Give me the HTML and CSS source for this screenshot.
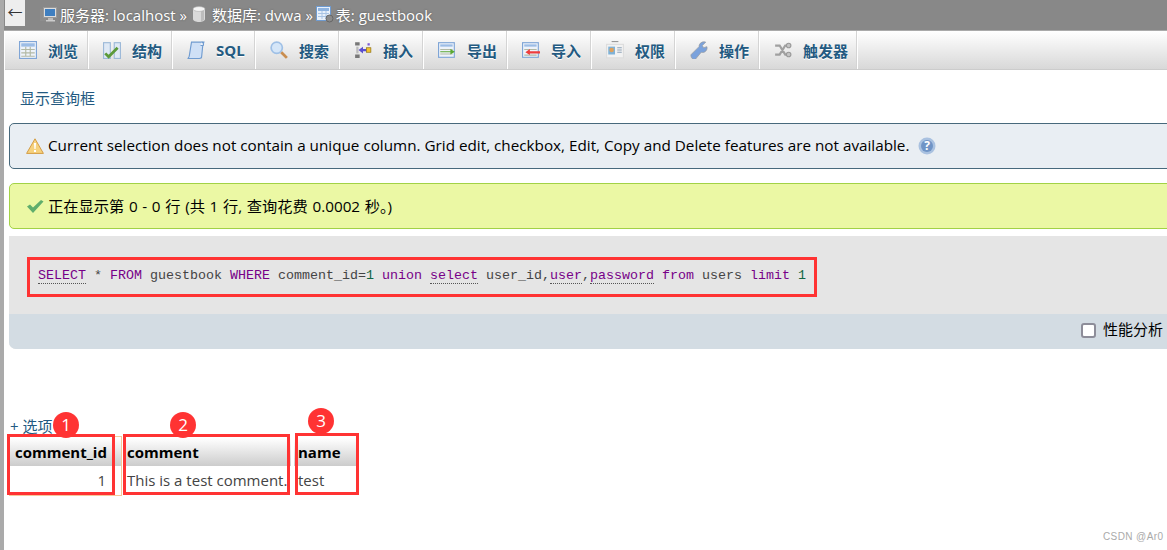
FILE: index.html
```html
<!DOCTYPE html>
<html lang="zh-CN">
<head>
    <meta charset="UTF-8">
    <meta name="viewport" content="width=device-width, initial-scale=1.0">
    <title>guestbook - phpMyAdmin</title>
    <link rel="stylesheet" href="styles.css">
</head>
<body>
    <div class="page">
        <div class="topbar">
            <a href="#" class="back">←</a>
            <div class="crumbs">
                <svg class="crumb-icon" viewBox="0 0 18 18"><rect x="0" y="4" width="6" height="12" fill="#8d8d8d"/><rect x="3.500" y="2.500" width="13" height="10" fill="#ddd" stroke="#999"/><rect x="5" y="4" width="10" height="7" fill="#3f7fc0"/><rect x="8" y="13" width="5" height="2" fill="#bbb"/><rect x="6" y="15" width="9" height="1.500" fill="#ccc"/></svg>
                <span>服务器: localhost »</span>
                <svg class="crumb-icon db-icon" viewBox="0 0 14 18"><path d="M1 4v10c0 4 12 4 12 0V4z" fill="#d9d9d9"/><path d="M9 5h3v10l-3 1.500z" fill="#bdbdbd"/><ellipse cx="7" cy="4" rx="6" ry="2.400" fill="#f4f4f4" stroke="#aaa" stroke-width=".6"/></svg>
                <span class="crumb-db">数据库: dvwa »</span>
                <svg class="crumb-icon" viewBox="0 0 18 18"><rect x=".5" y="1.500" width="14" height="14" fill="#e8f0fa" stroke="#6f9bd0"/><rect x="2" y="3" width="11" height="3" fill="#8fb4e0"/><path d="M2 8.500h11M2 11.500h11M6 6v8M10 6v8" stroke="#a9c4e4"/><circle cx="13.500" cy="13.500" r="3.500" fill="#8a8a8a" stroke="#666"/></svg>
                <span>表: guestbook</span>
            </div>
        </div>

        <ul class="tabs">
            <li class="tab">
                <svg class="tab-icon" viewBox="0 0 16 16"><rect x=".5" y=".5" width="15" height="15" fill="#eef3fa" stroke="#7fa5d6"/><rect x="2" y="2" width="12" height="3" fill="#9cbde6"/><path d="M2 7.500h12M2 10.500h12M2 13.500h12M6 5v9M10 5v9" stroke="#b2b9a5"/></svg>
                <span>浏览</span>
            </li>
            <li class="tab">
                <svg class="tab-icon" viewBox="0 0 16 16"><rect x=".5" y="1.500" width="6" height="14" fill="#dfe9f5" stroke="#9db9d8"/><rect x="10" y="1.500" width="5.500" height="14" fill="#dfe9f5" stroke="#9db9d8"/><path d="M2 11l3 3 8-8" fill="none" stroke="#5c9a3a" stroke-width="2.500"/></svg>
                <span>结构</span>
            </li>
            <li class="tab tab-sql">
                <svg class="tab-icon" viewBox="0 0 16 16"><path d="M4 1h11l-1 3-1 10c0 1-1 1.500-2 1.500H1l1-2z" fill="#cfe0f6" stroke="#6f9bd0"/><path d="M13 1c2 0 2 3 1 3h-2" fill="#eef3fa" stroke="#6f9bd0"/></svg>
                <span>SQL</span>
            </li>
            <li class="tab">
                <svg class="tab-icon" viewBox="0 0 16 16"><circle cx="6" cy="6" r="5" fill="#d5e6f8" stroke="#9fc0e6" stroke-width="1.500"/><path d="M10 10l5 5" stroke="#c98d4f" stroke-width="2.500"/></svg>
                <span>搜索</span>
            </li>
            <li class="tab">
                <svg class="tab-icon" viewBox="0 0 16 16"><path d="M1 1h4v3H1zM1 12h4v3H1z" fill="#777"/><path d="M2 5h2v6H2z" fill="#bbb"/><path d="M4 8l4-3v2h3v2H8v2z" fill="#5b4fd0"/><rect x="11" y="6" width="4" height="4" fill="#f2c230" stroke="#8a6d10" stroke-width=".6"/><path d="M12 2h2v2h-2z" fill="#7d5ad6"/></svg>
                <span>插入</span>
            </li>
            <li class="tab">
                <svg class="tab-icon" viewBox="0 0 16 16"><rect x=".5" y="1.500" width="14" height="13" fill="#eef3fa" stroke="#7fa5d6"/><rect x="2" y="3" width="11" height="2" fill="#9cbde6"/><path d="M2 7.500h11M2 11.500h11" stroke="#b2b9a5"/><path d="M2 9h9V7l4 2.500-4 2.500v-2H2z" fill="#5aa832"/></svg>
                <span>导出</span>
            </li>
            <li class="tab">
                <svg class="tab-icon" viewBox="0 0 16 16"><rect x=".5" y="1.500" width="14" height="13" fill="#eef3fa" stroke="#7fa5d6"/><rect x="2" y="3" width="11" height="2" fill="#9cbde6"/><path d="M2 7.500h11M2 12.500h11" stroke="#b2b9a5"/><path d="M16 9H7V7L3 10l4 2.500V11h9z" fill="#ee3d3d"/></svg>
                <span>导入</span>
            </li>
            <li class="tab">
                <svg class="tab-icon" viewBox="0 0 16 16"><rect x=".5" y="3" width="15" height="12" fill="#f2f2f2" stroke="#ddd"/><rect x="2" y="5" width="6" height="7" fill="#7fb2d8"/><circle cx="5" cy="8" r="2" fill="#e0a05a"/><path d="M10 6h4M10 8h4M10 10h4" stroke="#8fa3b8"/><path d="M5 .5h6" stroke="#999"/></svg>
                <span>权限</span>
            </li>
            <li class="tab">
                <svg class="tab-icon" viewBox="0 0 16 16"><path d="M1 12l7-7c0-3 3-5 6-4l-3 3 1 2 3-1c1 3-2 6-5 5l-5 6c-2 2-5-2-4-4z" fill="#7ba2dc" stroke="#9a9a9a" stroke-width=".6"/></svg>
                <span>操作</span>
            </li>
            <li class="tab">
                <svg class="tab-icon" viewBox="0 0 16 16"><path d="M1 4h4l5 8h3M1 12h4l5-8h3" fill="none" stroke="#a0a0a0" stroke-width="2"/><circle cx="13" cy="4" r="2" fill="#c4c4c4" stroke="#999"/><circle cx="13" cy="12" r="2" fill="#c4c4c4" stroke="#999"/></svg>
                <span>触发器</span>
            </li>
        </ul>

        <div class="content">
            <a href="#" class="query-link">显示查询框</a>

            <div class="notice">
                <svg class="msg-icon" viewBox="0 0 18 16"><path d="M9 .8L17.400 15.400H.6z" fill="#f6d27e" stroke="#d39c45" stroke-linejoin="round"/><path d="M8 5h2l-.4 6h-1.200zM8 12h2v2H8z" fill="#fff"/></svg>
                <span class="msg-text">Current selection does not contain a unique column. Grid edit, checkbox, Edit, Copy and Delete features are not available.</span>
                <svg class="help-icon" viewBox="0 0 18 18"><circle cx="9" cy="9" r="8.500" fill="#a9c1e0"/><circle cx="9" cy="9" r="6" fill="#6f94c6"/><text x="9" y="13" class="help-mark">?</text></svg>
            </div>

            <div class="success">
                <svg class="msg-icon" viewBox="0 0 18 16"><path d="M1 8.500l3-2 3 3L15 2l2.500 1.500L7 15z" fill="#5fae6c"/></svg>
                <span class="msg-text wide">正在显示第 0 - 0 行 (共 1 行, 查询花费 0.0002 秒。)</span>
            </div>

            <div class="sql-panel">
                <div class="sql-code">
                    <div class="sql-box"><a class="kw doc">SELECT</a> * <span class="kw">FROM</span> guestbook <span class="kw">WHERE</span> comment_id=<span class="num">1</span> <span class="kw">union</span> <a class="kw doc">select</a> user_id,<a class="kw doc">user</a>,<a class="kw doc">password</a> <span class="kw">from</span> users <span class="kw">limit</span> <span class="num">1</span></div>
                </div>
                <div class="sql-tools">
                    <label class="profiling"><input type="checkbox"><span>性能分析</span></label>
                </div>
            </div>

            <a href="#" class="options-link">+ 选项</a>

            <table class="results">
                <thead>
                    <tr>
                        <th class="col-id">comment_id</th>
                        <th class="col-comment">comment</th>
                        <th class="col-name">name</th>
                    </tr>
                </thead>
                <tbody>
                    <tr>
                        <td class="col-id num-cell">1</td>
                        <td class="col-comment">This is a test comment.</td>
                        <td class="col-name">test</td>
                    </tr>
                </tbody>
            </table>
        </div>

        <!-- 标注框 -->
        <div class="cell-outline"></div>
        <div class="mark mark-1"></div>
        <div class="mark mark-2"></div>
        <div class="mark mark-3"></div>
        <div class="badge badge-1">1</div>
        <div class="badge badge-2">2</div>
        <div class="badge badge-3">3</div>

        <div class="watermark">CSDN @Ar0</div>
    </div>
</body>
</html>
```

FILE: styles.css
```css
* {
    margin: 0;
    padding: 0;
    box-sizing: border-box;
}

html, body {
    height: 100%;
    overflow: hidden;
}

body {
    font-family: "Open Sans", "Noto Sans CJK SC", sans-serif;
    font-size: 15px;
    color: #000;
    background: #fff;
}

a {
    color: #235a81;
    text-decoration: none;
}

.page {
    position: relative;
    height: 550px;
    border-left: 4px solid #aaa;
    overflow: hidden;
}

.topbar {
    display: flex;
    height: 31px;
    background: #888;
    border-bottom: 1px solid #aaa;
}

.back {
    width: 20px;
    height: 26px;
    margin-left: 1px;
    background: #eee;
    color: #333;
    font-size: 15px;
    line-height: 24px;
    text-align: center;
}

.crumbs {
    display: flex;
    align-items: center;
    margin-left: 15px;
    height: 30px;
    padding-bottom: 2px;
    color: #fff;
    font-size: 15px;
    text-shadow: 0 0 2px #555;
}

.crumb-icon {
    width: 18px;
    height: 18px;
    margin-right: 2px;
}

.db-icon {
    width: 14px;
    margin-right: 6px;
}

.crumbs span {
    margin-right: 5px;
}

.crumbs .crumb-db {
    margin-right: 3px;
}

.tabs {
    display: flex;
    list-style: none;
    height: 39px;
    margin-left: 1px;
    background: linear-gradient(#fff, #d8d8d8);
    border-bottom: 1px solid #ccc;
}

.tab {
    display: flex;
    align-items: center;
    min-width: 84px;
    padding: 0 9px 0 14px;
    border-right: 1px solid #fff;
    box-shadow: inset -1px 0 0 #d4d4d4;
    color: #235a81;
    font-size: 15px;
    font-weight: bold;
    text-shadow: 0 1px 0 #fff;
}

.tab-sql {
    min-width: 83px;
}

.tab-icon {
    width: 18px;
    height: 18px;
    margin-right: 11px;
}

.content {
    padding: 0 0 0 5px;
}

.query-link {
    display: block;
    margin: 19px 0 0 11px;
    height: 22px;
    font-size: 15px;
    line-height: 18px;
}

.notice, .success {
    display: flex;
    align-items: center;
    height: 46px;
    margin-right: -20px;
    padding-left: 16px;
    border-radius: 5px;
    border: 1px solid;
}

.notice {
    margin-top: 12px;
    background: #e9eef3;
    border-color: #47697c;
}

.success {
    margin-top: 14px;
    background: #ebf8a4;
    border-color: #a2d246;
}

.msg-icon {
    width: 18px;
    height: 16px;
    margin-right: 4px;
}

.msg-text {
    margin-bottom: 3px;
    font-size: 15.260px;
}

.wide {
    word-spacing: .7px;
}

.help-icon {
    width: 18px;
    height: 18px;
    margin-left: 9px;
}

.help-mark {
    fill: #fff;
    font-size: 12px;
    font-weight: bold;
    text-anchor: middle;
}

.sql-panel {
    margin-top: 7px;
    margin-right: -20px;
    border-radius: 0 0 0 7px;
    overflow: hidden;
    background: #e5e5e5;
}

.sql-code {
    height: 78px;
    padding: 21px 0 0 18px;
}

.sql-box {
    display: inline-block;
    height: 40px;
    padding: 0 8px;
    border: 3px solid #f33;
    font-family: "Liberation Mono", monospace;
    font-size: 13.330px;
    line-height: 31px;
    color: #444;
}

.kw {
    color: #708;
}

.doc {
    border-bottom: 1px dotted #555;
}

.num {
    color: #164;
}

.sql-tools {
    display: flex;
    justify-content: flex-end;
    align-items: center;
    height: 35px;
    padding: 0 24px 6px 0;
    background: #d3dce3;
}

.profiling {
    display: flex;
    align-items: center;
    font-size: 15px;
}

.profiling input {
    appearance: none;
    width: 15px;
    height: 15px;
    margin: 4px 7px 0 0;
    background: #fff;
    border: 2px solid #8d8d99;
    border-radius: 3px;
}

.options-link {
    display: block;
    margin: 66px 0 0 1px;
    height: 22px;
    font-size: 15px;
    line-height: 22px;
}

.results {
    border-collapse: separate;
    border-spacing: 0;
    margin: 1px 0 0 1px;
}

.results th, .results td {
    background-clip: padding-box;
    border-right: solid #fff;
    white-space: nowrap;
}

.results th {
    height: 28px;
    background-image: linear-gradient(#fff, #ccc);
    font-size: 15px;
    font-weight: bold;
    text-align: left;
}

.results td {
    height: 28px;
    color: #444;
    font-size: 15px;
}

.col-id {
    width: 114px;
    padding: 0 7px 0 5px;
    border-right-width: 11px;
}

.col-comment {
    width: 170px;
    padding: 0 3px;
    border-right-width: 4px;
}

.col-name {
    padding: 0 15px 0 4px;
    border-right-width: 0;
}

.results .num-cell {
    padding-right: 15px;
    text-align: right;
}

.cell-outline {
    position: absolute;
    left: 5px;
    top: 436px;
    width: 113px;
    height: 60px;
    border: 1px solid #f5c99a;
}

.mark {
    position: absolute;
    border: 3px solid #f33;
}

.mark-1 {
    left: 3px;
    top: 434px;
    width: 108px;
    height: 61px;
}

.mark-2 {
    left: 119px;
    top: 434px;
    width: 167px;
    height: 61px;
}

.mark-3 {
    left: 291px;
    top: 433px;
    width: 64px;
    height: 62px;
}

.badge {
    position: absolute;
    top: 412px;
    width: 26px;
    height: 26px;
    border-radius: 50%;
    background: #f33;
    color: #fff;
    font-size: 17px;
    line-height: 25px;
    text-align: center;
}

.badge-1 {
    left: 49px;
}

.badge-2 {
    left: 166px;
}

.badge-3 {
    left: 304px;
    top: 408px;
}

.watermark {
    position: absolute;
    left: 1099px;
    top: 531px;
    color: #aaa;
    font-family: "Liberation Sans", sans-serif;
    font-size: 10px;
    letter-spacing: .4px;
}
```
